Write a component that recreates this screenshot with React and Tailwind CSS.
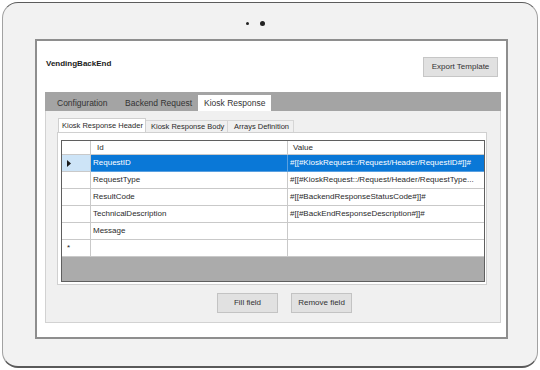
const rows = [
  { id: "RequestID", value: "#[[#KioskRequest::/Request/Header/RequestID#]]#", selected: true },
  { id: "RequestType", value: "#[[#KioskRequest::/Request/Header/RequestType..." },
  { id: "ResultCode", value: "#[[#BackendResponseStatusCode#]]#" },
  { id: "TechnicalDescription", value: "#[[#BackEndResponseDescription#]]#" },
  { id: "Message", value: "" },
];

const GridRow = ({ row }) => {
  const sel = row.selected;
  return (
    <div className="flex h-[17px]">
      <div
        className={`w-[29px] border-r border-b border-[#c9c9c9] flex items-center pl-[5px] ${
          sel ? "bg-[#cde4f7]" : "bg-white"
        }`}
      >
        {sel && (
          <svg width="4" height="7" viewBox="0 0 4 7">
            <polygon points="0,0 4,3.5 0,7" fill="#1a1a1a" />
          </svg>
        )}
      </div>
      <div
        className={`w-[197px] border-r border-b flex items-center pl-[2px] ${
          sel ? "bg-[#0a78d7] text-white border-[#5aa0e0]" : "bg-white text-[#2a2a2a] border-[#c9c9c9]"
        }`}
      >
        {row.id}
      </div>
      <div
        className={`w-[196px] border-b flex items-center pl-[2px] whitespace-nowrap overflow-hidden ${
          sel ? "bg-[#0a78d7] text-white border-[#5aa0e0]" : "bg-white text-[#2a2a2a] border-[#c9c9c9]"
        }`}
      >
        {row.value}
      </div>
    </div>
  );
};

const App = () => {
  return (
    <div className="w-[540px] h-[370px] bg-white p-[2px] font-['Liberation_Sans',Arial,sans-serif]">
      <div className="h-full rounded-[16px] border border-[#a2a2a2] border-t-[#5c5c5c] border-b-2 border-b-[#5a5a5a] bg-[#f2f2f2] flex flex-col">
        {/* camera */}
        <div className="h-[36px] pt-[5px] flex items-center">
          <div className="ml-[243px] w-[3px] h-[3px] rounded-full bg-[#222]" />
          <div className="ml-[11px] w-[5px] h-[5px] rounded-full bg-[#222]" />
        </div>

        {/* screen */}
        <div className="ml-[32px] w-[473px] h-[300px] border-2 border-[#8e8e8e] bg-white flex flex-col">
          <div className="h-[51px] flex justify-between items-start">
            <div className="pl-[9px] pt-[17px] text-[8px] font-bold text-[#1a1a1a]">VendingBackEnd</div>
            <button className="mt-[16px] mr-[8px] w-[75px] h-[20px] bg-[#e1e1e1] border border-[#c6c6c6] text-[8px] font-normal text-[#333]">
              Export Template
            </button>
          </div>

          <div className="ml-[8px] mr-[5px] flex flex-col">
            {/* main tabs */}
            <div className="h-[19px] bg-[#a4a4a4] flex items-end text-[8.5px] text-[#333]">
              <div className="w-[68px] h-[16px] pl-[12px] flex items-center">Configuration</div>
              <div className="w-[85px] h-[16px] pl-[12px] flex items-center">Backend Request</div>
              <div className="w-[73px] h-[16px] pl-[6px] flex items-center bg-white">Kiosk Response</div>
            </div>

            {/* tab page */}
            <div className="h-[212px] bg-[#f0f0f0] border border-t-0 border-[#d2d2d2] flex flex-col">
              <div className="h-[21px] pl-[12px] flex items-end text-[7.5px] text-[#2a2a2a]">
                <div className="w-[88px] h-[14px] pl-[3px] flex items-center bg-white border border-b-0 border-[#cfcfcf]">
                  Kiosk Response Header
                </div>
                <div className="w-[82px] h-[12px] pl-[5px] flex items-center border-t border-r border-[#d6d6d6]">
                  Kiosk Response Body
                </div>
                <div className="w-[66px] h-[12px] pl-[6px] flex items-center border-t border-r border-[#d6d6d6]">
                  Arrays Definition
                </div>
              </div>

              <div className="ml-[11px] w-[430px] h-[153px] bg-white border border-[#d0d0d0] pl-[3px] pt-[7px]">
                <div className="w-[424px] h-[142px] border border-[#5f5f5f] bg-[#ababab] text-[8px]">
                  <div className="flex h-[14px] bg-white text-[#2a2a2a]">
                    <div className="w-[29px] border-r border-b border-[#c9c9c9]" />
                    <div className="w-[197px] border-r border-b border-[#c9c9c9] pl-[6px] flex items-center">Id</div>
                    <div className="w-[196px] border-b border-[#c9c9c9] pl-[5px] flex items-center">Value</div>
                  </div>
                  {rows.map((r) => (
                    <GridRow key={r.id} row={r} />
                  ))}
                  <div className="flex h-[17px]">
                    <div className="w-[29px] border-r border-b border-[#c9c9c9] bg-white flex items-center pl-[5px] text-[8px] text-[#222]">
                      *
                    </div>
                    <div className="w-[197px] border-r border-b border-[#c9c9c9] bg-white" />
                    <div className="w-[196px] border-b border-[#c9c9c9] bg-white" />
                  </div>
                </div>
              </div>

              <div className="mt-[8px] flex text-[8px] font-normal text-[#333]">
                <button className="ml-[171px] w-[61px] h-[20px] bg-[#e1e1e1] border border-[#c3c3c3]">Fill field</button>
                <button className="ml-[13px] w-[61px] h-[20px] bg-[#e1e1e1] border border-[#c3c3c3]">Remove field</button>
              </div>
            </div>
          </div>
        </div>
      </div>
    </div>
  );
};

export default App;
